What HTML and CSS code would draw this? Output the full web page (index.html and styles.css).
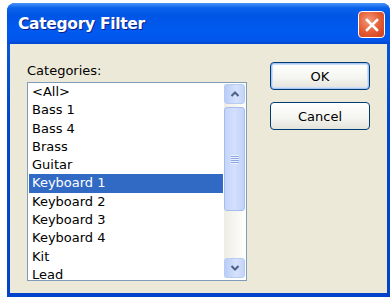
FILE: index.html
```html
<!DOCTYPE html>
<html>
<head>
<meta charset="utf-8">
<link rel="stylesheet" href="styles.css">
</head>
<body>
<div class="window">
  <div class="titlebar">
    <span class="title">Category Filter</span>
    <span class="close"><svg width="16" height="16" viewBox="0 0 16 16"><path d="M3 3 L13 13 M13 3 L3 13" stroke="#fff" stroke-width="2.6" stroke-linecap="square"/></svg></span>
  </div>
  <div class="content">
    <div class="left">
      <div class="label">Categories:</div>
      <div class="listbox">
        <ul class="items">
          <li>&lt;All&gt;</li>
          <li>Bass 1</li>
          <li>Bass 4</li>
          <li>Brass</li>
          <li>Guitar</li>
          <li class="sel">Keyboard 1</li>
          <li>Keyboard 2</li>
          <li>Keyboard 3</li>
          <li>Keyboard 4</li>
          <li>Kit</li>
          <li>Lead</li>
        </ul>
        <div class="scrollbar">
          <div class="sbtn"><svg width="10" height="8" viewBox="0 0 10 8"><path d="M1.5 6 L5 2.5 L8.5 6" fill="none" stroke="#4d6185" stroke-width="2"/></svg></div>
          <div class="thumb"><span class="grip"></span></div>
          <div class="track"></div>
          <div class="sbtn"><svg width="10" height="8" viewBox="0 0 10 8"><path d="M1.5 2 L5 5.5 L8.5 2" fill="none" stroke="#4d6185" stroke-width="2"/></svg></div>
        </div>
      </div>
    </div>
    <div class="buttons">
      <button class="btn def">OK</button>
      <button class="btn">Cancel</button>
    </div>
  </div>
</div>
</body>
</html>
```

FILE: styles.css
```css
html, body {
  margin: 0;
  background: #ffffff;
}
body {
  padding: 3px 2px 3px 7px;
  font-family: "DejaVu Sans", Verdana, sans-serif;
  font-size: 13px;
  color: #000;
}
.window {
  width: 383px;
  height: 294px;
  display: flex;
  flex-direction: column;
  background: linear-gradient(#0a5fd8, #0047cf 40%, #0343c9);
  border-radius: 8px 8px 0 0;
  box-sizing: border-box;
}
.titlebar {
  height: 41px;
  display: flex;
  align-items: center;
  justify-content: space-between;
  padding: 0 5px 0 11px;
  background: linear-gradient(#4a93f8 0%, #0b63ea 12%, #0055e5 30%, #005af0 70%, #0256ec 90%, #0047cf 100%);
  border-radius: 8px 8px 0 0;
  flex: none;
}
.title {
  color: #fff;
  font-family: "DejaVu Sans", sans-serif;
  font-weight: bold;
  font-size: 15.5px;
  letter-spacing: -0.3px;
  text-shadow: 1px 1px 0 #0a1e8c;
}
.close {
  width: 27px;
  height: 27px;
  box-sizing: border-box;
  border: 1px solid #fff;
  border-radius: 4px;
  background: radial-gradient(circle at 40% 35%, #f39a78, #e35a32 55%, #cc3d1c);
  display: flex;
  align-items: center;
  justify-content: center;
  margin-top: 2px;
}
.content {
  flex: 1;
  margin: 0 3px 4px 3px;
  background: #ece9d8;
  display: flex;
  padding: 0 0 0 17px;
}
.left {
  display: flex;
  flex-direction: column;
}
.label {
  margin-top: 19px;
  height: 19px;
  line-height: 15px;
}
.listbox {
  width: 220px;
  height: 199px;
  box-sizing: border-box;
  border: 1px solid #7f9db9;
  background: #fff;
  display: flex;
  overflow: hidden;
}
.items {
  list-style: none;
  margin: 0;
  padding: 0 0 0 1px;
  flex: 1;
  overflow: hidden;
}
.items li {
  height: 18.3px;
  line-height: 18.3px;
  padding-left: 3px;
  white-space: nowrap;
}
.items li.sel {
  background: #316ac5;
  color: #fff;
}
.scrollbar {
  width: 21px;
  margin: 1px 1px 2px 1px;
  display: flex;
  flex-direction: column;
  background: linear-gradient(90deg, #eeede5, #fefefb);
}
.sbtn {
  height: 20px;
  box-sizing: border-box;
  border: 1px solid #b7cbf5;
  border-radius: 3px;
  background: linear-gradient(90deg, #b9cdf7, #d6e2fc 60%, #c2d4f8);
  display: flex;
  align-items: center;
  justify-content: center;
}
.thumb {
  height: 104px;
  margin-top: 3px;
  box-sizing: border-box;
  border: 1px solid #a6bbef;
  border-radius: 3px;
  background: linear-gradient(90deg, #c6d5fb, #d3dffc 50%, #c2d2f9);
  display: flex;
  align-items: center;
  justify-content: center;
}
.grip {
  width: 8px;
  height: 9px;
  background: repeating-linear-gradient(#e8effe 0 1px, #8ea8e4 1px 2px);
}
.track {
  flex: 1;
}
.buttons {
  display: flex;
  flex-direction: column;
  gap: 12px;
  margin: 18px 0 0 23px;
}
.btn {
  width: 100px;
  height: 28px;
  box-sizing: border-box;
  border: 1px solid #003c74;
  border-radius: 4px;
  background: linear-gradient(#ffffff, #f4f4f0 60%, #e3e2da);
  font-family: "DejaVu Sans", sans-serif;
  font-size: 13px;
  color: #000;
  padding: 0;
}
.btn.def {
  box-shadow: inset 0 0 0 1px #a9c4f5, inset 0 0 0 2px #cde0fb;
}
```
